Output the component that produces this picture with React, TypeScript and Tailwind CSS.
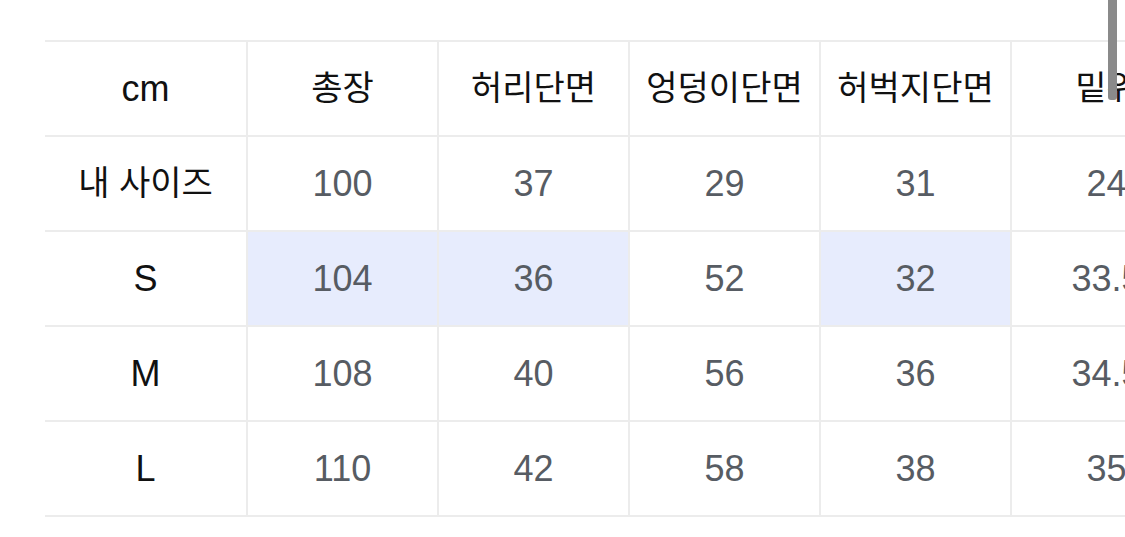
import React from 'react';

const font = { fontFamily: '"Liberation Sans", "Noto Sans CJK KR", sans-serif' };

const headers = ['총장', '허리단면', '엉덩이단면', '허벅지단면', '밑위'];
const labels = ['cm', '내 사이즈', 'S', 'M', 'L'];

const rows: { values: string[]; highlight: number[] }[] = [
  { values: ['100', '37', '29', '31', '24'], highlight: [] },
  { values: ['104', '36', '52', '32', '33.5'], highlight: [0, 1, 3] },
  { values: ['108', '40', '56', '36', '34.5'], highlight: [] },
  { values: ['110', '42', '58', '38', '35'], highlight: [] },
];

export default function App() {
  return (
    <div className="relative h-[537px] w-[1125px] overflow-hidden bg-white" style={font}>
      <div className="flex pl-[45px] pt-[40px]">
        {/* fixed label column */}
        <div className="w-[203px] shrink-0 border-t-2 border-[#ececec]">
          {labels.map((label, i) => (
            <div
              key={label}
              className={`flex h-[95px] items-center justify-center border-b-2 border-r-2 border-[#ececec] text-[#111] ${
                i === 1 ? 'text-[34px]' : 'text-[36px]'
              }`}
            >
              {label}
            </div>
          ))}
        </div>

        {/* measurements */}
        <div className="shrink-0 border-t-2 border-[#ececec]">
          <div className="flex">
            {headers.map((h) => (
              <div
                key={h}
                className="flex h-[95px] w-[191px] shrink-0 items-center justify-center border-b-2 border-r-2 border-[#ececec] text-[34px] text-[#111]"
              >
                {h}
              </div>
            ))}
          </div>
          {rows.map((row, r) => (
            <div key={r} className="flex">
              {row.values.map((v, c) => (
                <div
                  key={c}
                  className={`flex h-[95px] w-[191px] shrink-0 items-center justify-center border-b-2 border-r-2 border-[#ececec] text-[36px] text-[#575c63] ${
                    row.highlight.includes(c) ? 'bg-[#e7ecfd]' : 'bg-white'
                  }`}
                >
                  {v}
                </div>
              ))}
            </div>
          ))}
        </div>
      </div>

      {/* scroll indicator */}
      <div className="absolute right-[8px] top-0 h-[100px] w-[9px] rounded-b-[3px] bg-[#8a8a8a]" />
    </div>
  );
}
